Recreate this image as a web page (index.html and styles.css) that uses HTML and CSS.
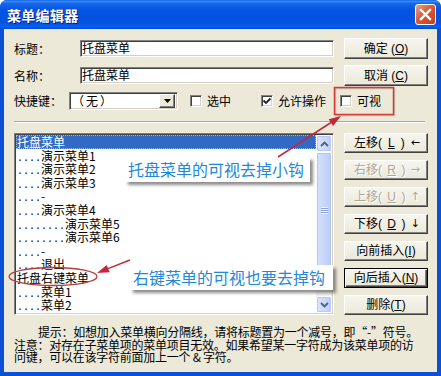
FILE: index.html
```html
<!DOCTYPE html>
<html lang="zh-CN">
<head>
    <meta charset="UTF-8">
    <meta name="viewport" content="width=device-width, initial-scale=1.0">
    <title>菜单编辑器</title>
    <link rel="stylesheet" href="styles.css">
</head>
<body>

<div class="window">
    <div class="titlebar">
        <span class="title">菜单编辑器</span>
        <span class="close">
            <svg width="13" height="13" viewBox="0 0 13 13"><path d="M2 2 L11 11 M11 2 L2 11" stroke="#fff" stroke-width="2.4" stroke-linecap="square"/></svg>
        </span>
    </div>

    <div class="client">
        <div class="row">
            <span class="label">标题：</span>
            <span class="edit">托盘菜单</span>
            <span class="btn">确定 (<u>O</u>)</span>
        </div>
        <div class="row">
            <span class="label">名称：</span>
            <span class="edit">托盘菜单</span>
            <span class="btn">取消 (<u>C</u>)</span>
        </div>
        <div class="row row-opts">
            <span class="label label-short">快捷键：</span>
            <span class="combo">
                <span class="combo-text">（无）</span>
                <span class="combo-btn"><svg width="7" height="4" viewBox="0 0 7 4"><path d="M0 0 H7 L3.5 4 Z" fill="#000"/></svg></span>
            </span>
            <span class="check check-first"><span class="box"></span>选中</span>
            <span class="check check-second"><span class="box"><svg width="10" height="10" viewBox="0 0 10 10"><path d="M1.5 4.5 L4 7 L8.5 2.5" stroke="#222" stroke-width="1.8" fill="none"/></svg></span>允许操作</span>
            <span class="check"><span class="box"></span>可视</span>
        </div>

        <div class="sep"></div>

        <div class="middle">
            <div class="list">
                <div class="items">
                    <div class="item selected">托盘菜单</div>
                    <div class="item"><span class="dots">....</span>演示菜单1</div>
                    <div class="item"><span class="dots">....</span>演示菜单2</div>
                    <div class="item"><span class="dots">....</span>演示菜单3</div>
                    <div class="item"><span class="dots">....</span>-</div>
                    <div class="item"><span class="dots">....</span>演示菜单4</div>
                    <div class="item"><span class="dots">........</span>演示菜单5</div>
                    <div class="item"><span class="dots">........</span>演示菜单6</div>
                    <div class="item"><span class="dots">....</span>-</div>
                    <div class="item"><span class="dots">....</span>退出</div>
                    <div class="item">托盘右键菜单</div>
                    <div class="item"><span class="dots">....</span>菜单1</div>
                    <div class="item"><span class="dots">....</span>菜单2</div>
                </div>
                <div class="scroll">
                    <span class="sb-btn"><svg width="9" height="6" viewBox="0 0 9 6"><path d="M1 5 L4.5 1.5 L8 5" stroke="#4D6185" stroke-width="1.8" fill="none"/></svg></span>
                    <span class="sb-thumb"><span class="grip"></span></span>
                    <span class="sb-track"></span>
                    <span class="sb-btn"><svg width="9" height="6" viewBox="0 0 9 6"><path d="M1 1 L4.5 4.5 L8 1" stroke="#4D6185" stroke-width="1.8" fill="none"/></svg></span>
                </div>
            </div>
            <div class="side">
                <span class="btn btn-move">左移(<u>L</u>)<span class="arrow">←</span></span>
                <span class="btn btn-move disabled">右移(<u>R</u>)<span class="arrow">→</span></span>
                <span class="btn btn-move disabled">上移(<u>U</u>)<span class="arrow">↑</span></span>
                <span class="btn btn-move">下移(<u>D</u>)<span class="arrow">↓</span></span>
                <span class="btn">向前插入(<u>I</u>)</span>
                <span class="btn default">向后插入(<u>N</u>)</span>
                <span class="btn">删除(<u>T</u>)</span>
            </div>
        </div>

        <div class="hint">
            <div class="line first">提示：如想加入菜单横向分隔线，请将标题置为一个减号，即“-”符号。</div>
            <div class="line">注意：对存在子菜单项的菜单项目无效。如果希望某一字符成为该菜单项的访</div>
            <div class="line">问键，可以在该字符前面加上一个 &amp; 字符。</div>
        </div>
    </div>

    <div class="callout callout-top">托盘菜单的可视去掉小钩</div>
    <div class="callout callout-bottom">右键菜单的可视也要去掉钩</div>

    <svg class="marks" width="441" height="376" viewBox="0 0 441 376">
        <rect x="335.5" y="88.5" width="59" height="27" fill="none" stroke="rgba(0,0,0,0.18)" stroke-width="1.5"/>
        <rect x="334.5" y="87.5" width="59" height="27" fill="none" stroke="#D43B3B" stroke-width="1.5"/>
        <line x1="278" y1="157" x2="331" y2="122.5" stroke="#C0283C" stroke-width="1.5"/>
        <polygon points="341,116 333.1,125.9 328.7,119.2" fill="#C0283C"/>
        <line x1="130" y1="260" x2="108" y2="268.6" stroke="#C0283C" stroke-width="1.5"/>
        <polygon points="97,273 109.7,272.3 106.7,264.9" fill="#C0283C"/>
        <ellipse cx="53" cy="276.5" rx="44" ry="9" fill="none" stroke="#B43C3C" stroke-width="1.3"/>
    </svg>
</div>

</body>
</html>
```

FILE: styles.css
```css
* {
    box-sizing: border-box;
}
html, body {
    margin: 0;
}
body {
    width: 441px;
    height: 376px;
    overflow: hidden;
    font-family: "Noto Sans CJK SC", "Noto Sans", sans-serif;
    font-size: 12px;
    color: #000;
    background: #fff;
}
.window {
    position: relative;
    width: 441px;
    height: 376px;
    display: flex;
    flex-direction: column;
    background: #0B4FD4;
    border-radius: 7px 7px 0 0;
}
.titlebar {
    height: 29px;
    flex: none;
    display: flex;
    align-items: center;
    justify-content: space-between;
    padding: 0 5px 0 7px;
    border-radius: 7px 7px 0 0;
    background: linear-gradient(to bottom, #0A5FE6 0%, #3C8CF3 4%, #1666E8 12%, #0553E3 35%, #0452DE 60%, #0553E3 80%, #0560F0 92%, #0347CF 100%);
}
.title {
    color: #fff;
    font-weight: bold;
    font-size: 14px;
    line-height: 16px;
    letter-spacing: 0.3px;
    text-shadow: 1px 1px 0 #0A1C7A;
}
.close {
    width: 21px;
    height: 21px;
    border: 1px solid #fff;
    border-radius: 3px;
    display: flex;
    align-items: center;
    justify-content: center;
    background: linear-gradient(135deg, #EBA189 0%, #D95A36 45%, #C53F22 100%);
}
.client {
    flex: 1;
    margin: 0 4px 4px;
    padding: 9px 9px 0 10px;
    background: #ECE9D8;
}
.row {
    display: flex;
    align-items: center;
    height: 21px;
    margin-bottom: 6px;
}
.label {
    width: 66px;
    line-height: 14px;
}
.label-short {
    width: 55px;
}
.edit {
    width: 254px;
    height: 17px;
    padding-left: 1px;
    line-height: 13px;
    background: #fff;
    border: 1px solid;
    border-color: #808080 #fff #fff #808080;
    box-shadow: inset 1px 1px #404040, inset -1px -1px #D4D0C8;
}
.btn {
    display: flex;
    align-items: center;
    justify-content: center;
    width: 84px;
    height: 21px;
    margin-left: auto;
    font-family: "Liberation Sans", "Noto Sans CJK SC", sans-serif;
    line-height: 14px;
    background: linear-gradient(to bottom, #F6F5EF, #ECE9D8);
    border: 1px solid;
    border-color: #fff #404040 #404040 #fff;
    box-shadow: inset -1px -1px #808080;
}
.row-opts {
    height: 18px;
}
.combo {
    display: flex;
    align-items: center;
    justify-content: space-between;
    width: 109px;
    height: 18px;
    background: #fff;
    border: 1px solid;
    border-color: #808080 #fff #fff #808080;
    box-shadow: inset 1px 1px #404040, inset -1px -1px #D4D0C8;
    padding: 2px;
}
.combo-text {
    line-height: 14px;
    letter-spacing: 2px;
}
.combo-btn {
    width: 16px;
    height: 14px;
    display: flex;
    align-items: center;
    justify-content: center;
    background: #ECE9D8;
    border: 1px solid;
    border-color: #fff #404040 #404040 #fff;
    box-shadow: inset -1px -1px #808080;
}
.check {
    display: flex;
    align-items: center;
    line-height: 14px;
}
.check-first {
    width: 71px;
    margin-left: 12px;
}
.check-second {
    width: 79px;
}
.box {
    width: 12px;
    height: 12px;
    margin-right: 5px;
    display: flex;
    align-items: center;
    justify-content: center;
    background: #fff;
    border: 1px solid;
    border-color: #808080 #fff #fff #808080;
    box-shadow: inset 1px 1px #404040, inset -1px -1px #D4D0C8;
}
.sep {
    height: 2px;
    margin: 11px 3px 0 0;
    border-top: 1px solid #ACA899;
    border-bottom: 1px solid #fff;
}
.middle {
    display: flex;
    height: 182px;
    margin-top: 10px;
}
.list {
    display: flex;
    width: 320px;
    background: #fff;
    border: 1px solid;
    border-color: #808080 #fff #fff #808080;
    box-shadow: inset 1px 1px #404040, inset -1px -1px #D4D0C8;
    padding: 1px;
}
.items {
    flex: 1;
    overflow: hidden;
}
.item {
    height: 13.6px;
    line-height: 13.6px;
    padding-left: 1px;
    white-space: nowrap;
}
.item.selected {
    background: #316AC5;
    color: #fff;
    outline: 1px dotted #9DB8E8;
    outline-offset: -1px;
}
.dots {
    font-family: "Liberation Mono", monospace;
    font-size: 10px;
}
.scroll {
    width: 16px;
    display: flex;
    flex-direction: column;
    background: #F4F3EE;
}
.sb-btn {
    height: 17px;
    flex: none;
    display: flex;
    align-items: center;
    justify-content: center;
    border: 1px solid #fff;
    border-radius: 2px;
    background: linear-gradient(to right, #DCE6FD, #BCCEF8);
    box-shadow: inset 0 0 0 1px #B7C9F5;
}
.sb-thumb {
    height: 116px;
    flex: none;
    display: flex;
    align-items: center;
    justify-content: center;
    border: 1px solid #fff;
    border-radius: 2px;
    background: linear-gradient(to right, #D5E0FD, #BACDF7);
    box-shadow: inset 0 0 0 1px #B2C6F4;
}
.grip {
    width: 7px;
    height: 7px;
    background: repeating-linear-gradient(to bottom, #EEF3FE 0 1px, #8CA6E0 1px 2px);
}
.sb-track {
    flex: 1;
}
.side {
    display: flex;
    flex-direction: column;
    gap: 7px;
    width: 84px;
    margin-left: auto;
}
.side .btn {
    height: 20px;
    margin-left: 0;
}
.btn-move {
    justify-content: space-between;
    padding: 0 7px 0 9px;
}
.arrow {
    font-family: "DejaVu Sans", sans-serif;
    font-size: 11px;
}
.btn.disabled {
    color: #ACA899;
    text-shadow: 1px 1px 0 #fff;
}
.btn.default {
    border: 1px solid #000;
    box-shadow: inset 1px 1px #fff, inset -1px -1px #404040, inset -2px -2px #808080;
}
.hint {
    margin-top: 11px;
    line-height: 12.5px;
    letter-spacing: -0.25px;
    white-space: nowrap;
}
.hint .first {
    text-indent: 24px;
}
.callout {
    position: absolute;
    height: 25px;
    padding: 0 3px;
    font-size: 16px;
    line-height: 25px;
    color: #2388DA;
    background: #fff;
    white-space: nowrap;
    box-shadow: 3px 3px 3px rgba(0, 0, 0, 0.45);
}
.callout-top {
    left: 125px;
    top: 157px;
    width: 185px;
}
.callout-bottom {
    left: 130px;
    top: 265px;
    width: 203px;
}
.marks {
    position: absolute;
    left: 0;
    top: 0;
    pointer-events: none;
}
```
